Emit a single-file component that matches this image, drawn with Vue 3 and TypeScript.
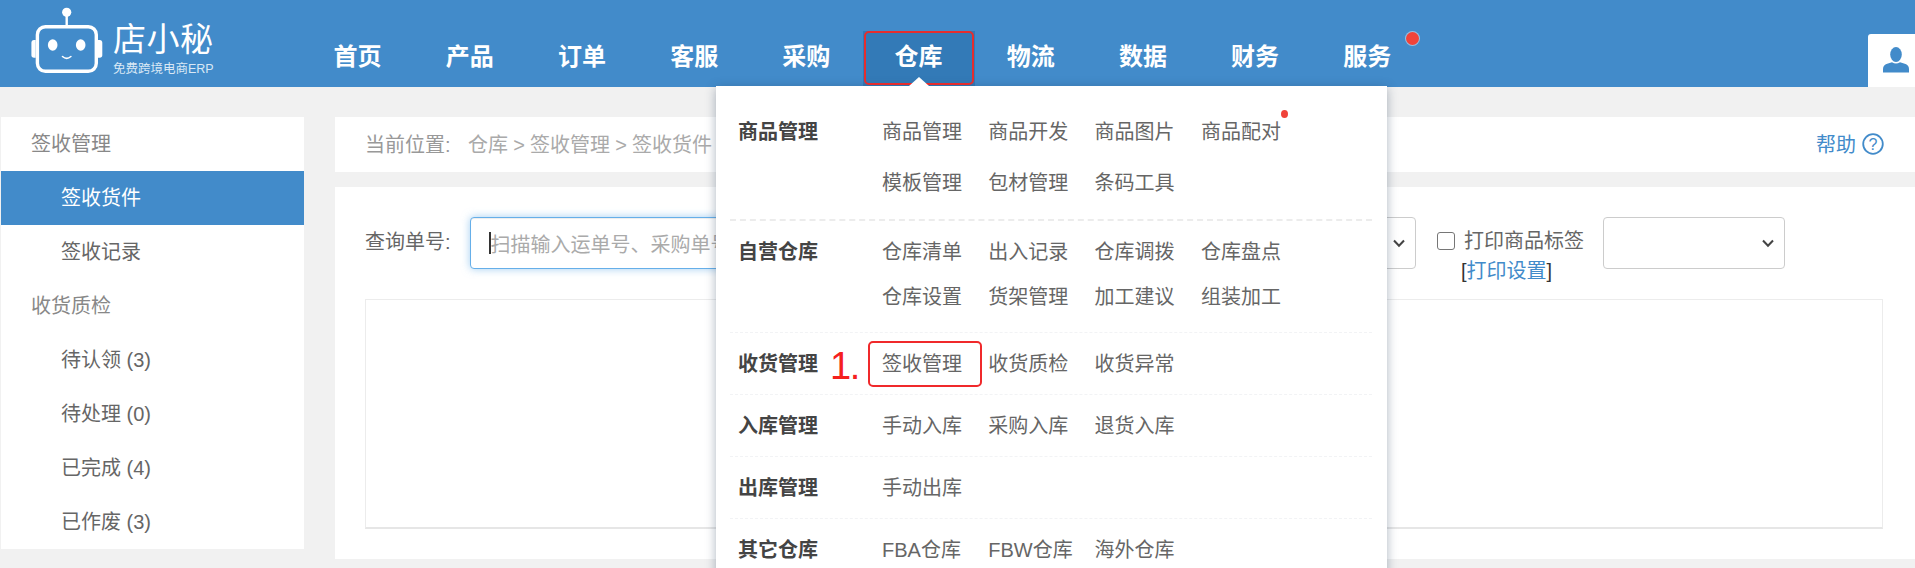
<script setup lang="ts">
interface Group {
  title: string
  links: string[]
  kind: string
}

const navItems: string[] = ['首页', '产品', '订单', '客服', '采购', '仓库', '物流', '数据', '财务', '服务']

const sideItems: { label: string; kind: string }[] = [
  { label: '签收管理', kind: 'head' },
  { label: '签收货件', kind: 'sub active' },
  { label: '签收记录', kind: 'sub' },
  { label: '收货质检', kind: 'head' },
  { label: '待认领 (3)', kind: 'sub' },
  { label: '待处理 (0)', kind: 'sub' },
  { label: '已完成 (4)', kind: 'sub' },
  { label: '已作废 (3)', kind: 'sub' },
]

const groups: Group[] = [
  { title: '商品管理', kind: 'first', links: ['商品管理', '商品开发', '商品图片', '商品配对', '模板管理', '包材管理', '条码工具'] },
  { title: '自营仓库', kind: 'second', links: ['仓库清单', '出入记录', '仓库调拨', '仓库盘点', '仓库设置', '货架管理', '加工建议', '组装加工'] },
  { title: '收货管理', kind: 'single', links: ['签收管理', '收货质检', '收货异常'] },
  { title: '入库管理', kind: 'single', links: ['手动入库', '采购入库', '退货入库'] },
  { title: '出库管理', kind: 'single', links: ['手动出库'] },
  { title: '其它仓库', kind: 'single', links: ['FBA仓库', 'FBW仓库', '海外仓库'] },
]
</script>

<template>
  <div class="page">
    <header class="topbar">
      <div class="logo">
        <svg class="robot" width="72" height="87" viewBox="0 0 72 87">
          <circle cx="35.7" cy="12.3" r="4.6" fill="#fff" />
          <rect x="34.5" y="14" width="2.4" height="11" fill="#fff" />
          <path d="M25 25.6 H46.4 V27.5 H25 Z" fill="#fff" />
          <rect x="6.4" y="26.7" width="58.9" height="44.6" rx="8" fill="none" stroke="#fff" stroke-width="3.4" />
          <path d="M4.7 40 H3 Q0.4 40 0.4 43 V55 Q0.4 57.8 3 57.8 H4.7 Z" fill="#fff" />
          <path d="M67 40 H68.7 Q71.3 40 71.3 43 V55 Q71.3 57.8 68.7 57.8 H67 Z" fill="#fff" />
          <ellipse cx="21.7" cy="45" rx="4.8" ry="5.8" fill="#fff" />
          <ellipse cx="49.7" cy="45" rx="4.8" ry="5.8" fill="#fff" />
          <path d="M31.5 56.5 Q35.7 60.2 39.9 56.5" fill="none" stroke="#fff" stroke-width="1.6" stroke-linecap="round" />
        </svg>
        <div class="brand">
          <div class="brand-name">店小秘</div>
          <div class="brand-sub">免费跨境电商ERP</div>
        </div>
      </div>
      <nav class="nav">
        <div v-for="item in navItems" :key="item" class="nav-item" :class="{ current: item === '仓库' }">
          {{ item }}
          <i v-if="item === '服务'" class="nav-dot"></i>
        </div>
      </nav>
      <div class="user-tab">
        <svg width="28" height="26" viewBox="0 0 28 26">
          <ellipse cx="14" cy="7.5" rx="5.8" ry="7.5" fill="#428bca" />
          <path d="M1 25.5 V22 Q1 17.5 6 16.5 L10 15.2 Q14 18 18 15.2 L22 16.5 Q27 17.5 27 22 V25.5 Z" fill="#428bca" />
        </svg>
      </div>
    </header>

    <main class="main">
      <aside class="side">
        <div v-for="item in sideItems" :key="item.label" class="side-row" :class="item.kind">{{ item.label }}</div>
      </aside>
      <section class="content">
        <div class="crumbs">
          <div class="crumb-text">
            <span class="crumb-label">当前位置:</span>
            <span class="crumb-path">仓库<b>&gt;</b>签收管理<b>&gt;</b>签收货件</span>
          </div>
          <div class="help">
            <span>帮助</span>
            <svg width="22" height="22" viewBox="0 0 22 22">
              <circle cx="11" cy="11" r="9.8" fill="none" stroke="#428bca" stroke-width="1.8" />
              <text x="11" y="16.5" text-anchor="middle" class="help-q">?</text>
            </svg>
          </div>
        </div>
        <div class="panel">
          <div class="form">
            <label class="form-label">查询单号:</label>
            <div class="scan"><i class="caret"></i><span>扫描输入运单号、采购单号</span></div>
            <div class="select first-select">
              <svg width="14" height="9" viewBox="0 0 14 9"><path d="M2 1.5 L7 6.8 L12 1.5" fill="none" stroke="#444" stroke-width="2" /></svg>
            </div>
            <div class="print">
              <div class="print-line"><i class="check"></i><span>打印商品标签</span></div>
              <div class="print-set">[<a>打印设置</a>]</div>
            </div>
            <div class="select last-select">
              <svg width="14" height="9" viewBox="0 0 14 9"><path d="M2 1.5 L7 6.8 L12 1.5" fill="none" stroke="#444" stroke-width="2" /></svg>
            </div>
          </div>
          <div class="result"></div>
        </div>
      </section>
    </main>

    <div class="drop">
      <div v-for="g in groups" :key="g.title" class="group" :class="g.kind">
        <div class="group-title">{{ g.title }}</div>
        <div class="group-links">
          <span v-for="l in g.links" :key="l" class="group-link" :class="{ dotted: l === '商品配对' }">{{ l }}</span>
        </div>
      </div>
    </div>

    <div class="mark-nav"></div>
    <div class="arrow"></div>
    <div class="mark-link"></div>
    <div class="mark-num">1.</div>
  </div>
</template>

<style scoped>
.page {
  position: relative;
  width: 1915px;
  height: 568px;
  overflow: hidden;
  background: #f1f1f1;
  font-family: "Liberation Sans", "Noto Sans CJK SC", sans-serif;
  font-size: 20px;
  color: #666;
}
.topbar {
  display: flex;
  height: 87px;
  background: #428bca;
  color: #fff;
}
.logo {
  display: flex;
  flex: none;
  width: 302px;
  padding-left: 31px;
  box-sizing: border-box;
}
.brand {
  margin-left: 10px;
  padding-top: 19px;
}
.brand-name {
  font-size: 33px;
  line-height: 41px;
  letter-spacing: 0.5px;
  white-space: nowrap;
}
.brand-sub {
  font-size: 12.5px;
  line-height: 16px;
  margin-top: 1px;
  color: #d9e8f5;
  white-space: nowrap;
}
.nav {
  display: flex;
  align-self: flex-end;
}
.nav-item {
  position: relative;
  box-sizing: border-box;
  width: 112.2px;
  height: 56px;
  padding: 0 0 4px 31.6px;
  line-height: 52px;
  font-size: 24px;
  font-weight: 700;
  white-space: nowrap;
}
.nav-item.current {
  background: #337ab7;
}
.nav-dot {
  position: absolute;
  left: 94px;
  top: 1px;
  width: 13px;
  height: 13px;
  border-radius: 50%;
  background: #f0433a;
  box-shadow: 0 0 0 1px rgba(255, 255, 255, 0.45);
}
.user-tab {
  display: flex;
  box-sizing: border-box;
  align-self: flex-end;
  width: 47px;
  height: 53px;
  margin-left: auto;
  padding: 13px 0 0 14px;
  background: #fff;
  border-top-left-radius: 3px;
}
.main {
  display: flex;
  padding-top: 30px;
}
.side {
  flex: none;
  width: 303px;
  margin-left: 1px;
  background: #fff;
  align-self: flex-start;
}
.side-row {
  height: 54px;
  line-height: 54px;
  white-space: nowrap;
}
.side-row.head {
  padding-left: 30px;
  color: #888;
}
.side-row.sub {
  padding-left: 60px;
  color: #666;
}
.side-row.active {
  background: #428bca;
  color: #fff;
}
.content {
  flex: none;
  width: 1580px;
  margin-left: 31px;
}
.crumbs {
  display: flex;
  justify-content: space-between;
  align-items: center;
  box-sizing: border-box;
  height: 55px;
  padding: 0 31px 2px 30px;
  background: #fff;
}
.crumb-text {
  display: flex;
  color: #aaa;
}
.crumb-label {
  width: 103px;
  color: #999;
}
.crumb-path b {
  display: inline-block;
  width: 22px;
  font-weight: 400;
  text-align: center;
}
.help {
  display: flex;
  align-items: center;
  gap: 6px;
  color: #428bca;
}
.help svg {
  display: block;
}
.help-q {
  fill: #428bca;
  font-size: 16px;
}
.panel {
  box-sizing: border-box;
  height: 372px;
  margin-top: 15px;
  padding: 30px 32px 0 30px;
  background: #fff;
}
.form {
  display: flex;
  height: 52px;
}
.form-label {
  width: 105px;
  line-height: 50px;
  flex: none;
}
.scan {
  display: flex;
  align-items: center;
  flex: none;
  box-sizing: border-box;
  width: 703px;
  height: 52px;
  padding-left: 18px;
  background: #fff;
  border: 1px solid #66afe9;
  border-radius: 4px;
  box-shadow: inset 0 1px 1px rgba(0, 0, 0, 0.075), 0 0 8px rgba(102, 175, 233, 0.6);
  color: #aaa;
  white-space: nowrap;
}
.caret {
  flex: none;
  width: 1.5px;
  height: 22px;
  background: #333;
}
.select {
  display: flex;
  align-items: center;
  justify-content: flex-end;
  flex: none;
  box-sizing: border-box;
  height: 52px;
  padding-right: 9px;
  background: #fff;
  border: 1px solid #ccc;
  border-radius: 4px;
}
.first-select {
  width: 226px;
  margin-left: 17px;
}
.last-select {
  width: 182px;
  margin-left: 20px;
}
.print {
  flex: none;
  width: 146px;
  margin-left: 21px;
  padding-top: 9px;
  line-height: 30px;
  white-space: nowrap;
}
.print-line {
  display: flex;
  align-items: center;
}
.check {
  flex: none;
  box-sizing: border-box;
  width: 18px;
  height: 18px;
  margin-right: 9px;
  border: 1.5px solid #767676;
  border-radius: 3px;
  background: #fff;
}
.print-set {
  padding-left: 24px;
  color: #333;
}
.print-set a {
  color: #428bca;
}
.result {
  box-sizing: border-box;
  height: 230px;
  margin-top: 30px;
  border: 1px solid #ececec;
  border-bottom: 2px solid #e6e6e6;
}
.drop {
  position: absolute;
  left: 716px;
  top: 86px;
  box-sizing: border-box;
  width: 671px;
  height: 520px;
  padding: 0 15px 0 14px;
  background: #fff;
  box-shadow: 0 2px 10px rgba(40, 60, 90, 0.38);
}
.group {
  display: flex;
  box-sizing: border-box;
  padding-left: 8px;
  border-bottom: 1px dashed #f2f3f5;
}
.group.first {
  height: 135px;
  padding-top: 21px;
  border-bottom: 2px dashed #ececec;
  line-height: 51px;
}
.group.second {
  height: 112px;
  padding-top: 9px;
  line-height: 45px;
}
.group.single {
  height: 62px;
  line-height: 62px;
}
.group-title {
  flex: none;
  width: 144px;
  font-weight: 700;
  color: #444;
}
.group-links {
  display: grid;
  grid-template-columns: repeat(4, 80px);
  column-gap: 26.3px;
  align-content: start;
}
.group-link {
  position: relative;
  white-space: nowrap;
}
.dotted::after {
  content: "";
  position: absolute;
  left: 80px;
  top: 3px;
  width: 7px;
  height: 8px;
  border-radius: 50%;
  background: #f0433a;
}
.mark-nav {
  position: absolute;
  left: 864px;
  top: 31px;
  box-sizing: border-box;
  width: 110px;
  height: 54px;
  border: 2.5px solid #e52d2d;
  border-radius: 5px;
}
.arrow {
  position: absolute;
  left: 909px;
  top: 77px;
  width: 0;
  height: 0;
  border-left: 10px solid transparent;
  border-right: 10px solid transparent;
  border-bottom: 9px solid #fff;
}
.mark-link {
  position: absolute;
  left: 868px;
  top: 341px;
  box-sizing: border-box;
  width: 114px;
  height: 46px;
  border: 2px solid #f0292b;
  border-radius: 5px;
}
.mark-num {
  position: absolute;
  left: 830px;
  top: 344px;
  font-size: 38px;
  line-height: 44px;
  letter-spacing: -1.5px;
  color: #f5201e;
}
</style>
